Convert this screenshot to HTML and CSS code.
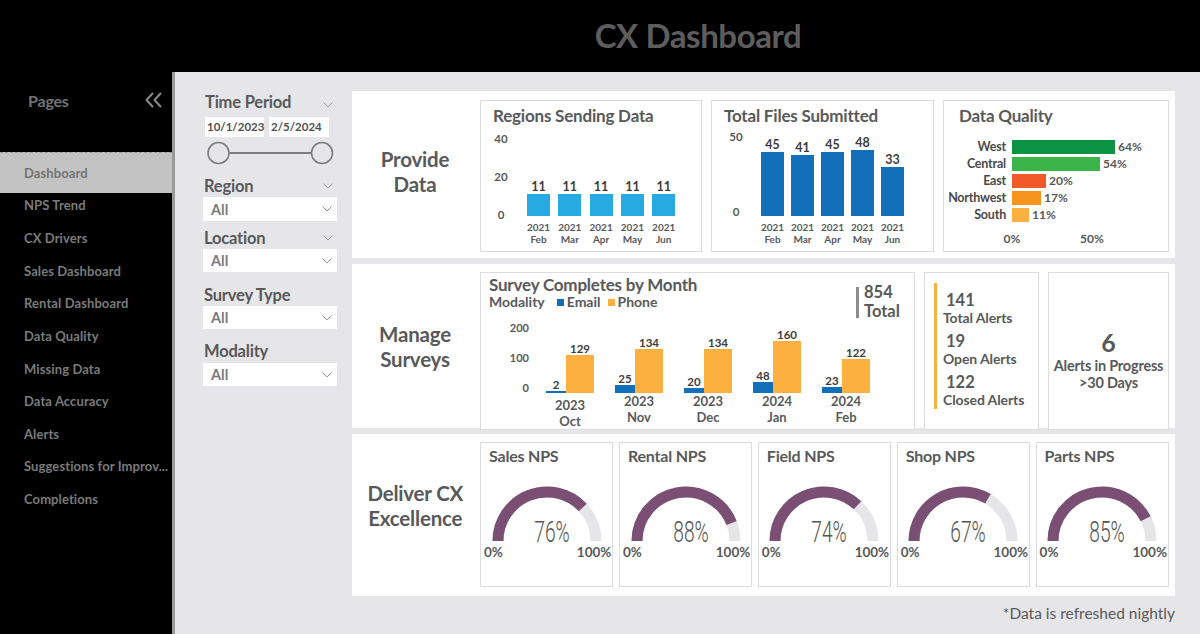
FILE: index.html
```html
<!DOCTYPE html>
<html lang="en">
<head>
<meta charset="utf-8">
<title>CX Dashboard</title>
<link rel="stylesheet" href="styles.css">
</head>
<body>
<header class="topbar"><h1 class="title">CX Dashboard</h1></header>
<div class="layout">
  <aside class="sidebar">
    <div class="pages-row">
      <span class="pages">Pages</span>
      <svg class="collapse" width="17" height="16" viewBox="0 0 17 16"><polyline points="8,1 1.5,8 8,15"/><polyline points="16,1 9.5,8 16,15"/></svg>
    </div>
    <nav class="nav">
      <div class="nav-item active">Dashboard</div>
      <div class="nav-item">NPS Trend</div>
      <div class="nav-item">CX Drivers</div>
      <div class="nav-item">Sales Dashboard</div>
      <div class="nav-item">Rental Dashboard</div>
      <div class="nav-item">Data Quality</div>
      <div class="nav-item">Missing Data</div>
      <div class="nav-item">Data Accuracy</div>
      <div class="nav-item">Alerts</div>
      <div class="nav-item">Suggestions for Improv...</div>
      <div class="nav-item">Completions</div>
    </nav>
  </aside>

  <main class="main">
    <section class="filters">
      <div class="f-head f-time"><span>Time Period</span><svg class="chev" viewBox="0 0 10 6"><polyline points="0.5,0.5 5,5 9.5,0.5"/></svg></div>
      <div class="dates"><span class="date d1">10/1/2023</span><span class="date d2">2/5/2024</span></div>
      <svg class="slider" width="134" height="26" viewBox="0 0 134 26"><line x1="26" y1="13" x2="108" y2="13"/><circle cx="15.5" cy="13" r="10.5"/><circle cx="119" cy="13" r="10.5"/></svg>

      <div class="f-head f-region"><span>Region</span><svg class="chev" viewBox="0 0 10 6"><polyline points="0.5,0.5 5,5 9.5,0.5"/></svg></div>
      <div class="dropdown dd-region"><span>All</span><svg class="chev" viewBox="0 0 10 6"><polyline points="0.5,0.5 5,5 9.5,0.5"/></svg></div>

      <div class="f-head f-location"><span>Location</span><svg class="chev" viewBox="0 0 10 6"><polyline points="0.5,0.5 5,5 9.5,0.5"/></svg></div>
      <div class="dropdown"><span>All</span><svg class="chev" viewBox="0 0 10 6"><polyline points="0.5,0.5 5,5 9.5,0.5"/></svg></div>

      <div class="f-head f-survey"><span>Survey Type</span></div>
      <div class="dropdown"><span>All</span><svg class="chev" viewBox="0 0 10 6"><polyline points="0.5,0.5 5,5 9.5,0.5"/></svg></div>

      <div class="f-head f-modality"><span>Modality</span></div>
      <div class="dropdown dd-modality"><span>All</span><svg class="chev" viewBox="0 0 10 6"><polyline points="0.5,0.5 5,5 9.5,0.5"/></svg></div>
    </section>

    <section class="content">
      <!-- Provide Data -->
      <div class="panel panel-provide">
        <div class="panel-label">Provide<br>Data</div>

        <div class="card">
          <div class="card-title">Regions Sending Data</div>
          <div class="colchart cc-regions">
            <div class="yaxis"><span>40</span><span>20</span><span>0</span></div>
            <div class="bars">
              <div class="bcol"><span class="val">11</span><div class="bar light" style="height:22px"></div><div class="xl">2021<br>Feb</div></div>
              <div class="bcol"><span class="val">11</span><div class="bar light" style="height:22px"></div><div class="xl">2021<br>Mar</div></div>
              <div class="bcol"><span class="val">11</span><div class="bar light" style="height:22px"></div><div class="xl">2021<br>Apr</div></div>
              <div class="bcol"><span class="val">11</span><div class="bar light" style="height:22px"></div><div class="xl">2021<br>May</div></div>
              <div class="bcol"><span class="val">11</span><div class="bar light" style="height:22px"></div><div class="xl">2021<br>Jun</div></div>
            </div>
          </div>
        </div>

        <div class="card">
          <div class="card-title">Total Files Submitted</div>
          <div class="colchart cc-files">
            <div class="yaxis"><span>50</span><span>0</span></div>
            <div class="bars">
              <div class="bcol"><span class="val">45</span><div class="bar dark" style="height:64px"></div><div class="xl">2021<br>Feb</div></div>
              <div class="bcol"><span class="val">41</span><div class="bar dark" style="height:61px"></div><div class="xl">2021<br>Mar</div></div>
              <div class="bcol"><span class="val">45</span><div class="bar dark" style="height:64px"></div><div class="xl">2021<br>Apr</div></div>
              <div class="bcol"><span class="val">48</span><div class="bar dark" style="height:66px"></div><div class="xl">2021<br>May</div></div>
              <div class="bcol"><span class="val">33</span><div class="bar dark" style="height:49px"></div><div class="xl">2021<br>Jun</div></div>
            </div>
          </div>
        </div>

        <div class="card">
          <div class="card-title dq-title">Data Quality</div>
          <div class="dq">
            <div class="dq-row"><span class="dq-lab">West</span><span class="dq-bar west" style="width:103px"></span><span class="dq-val">64%</span></div>
            <div class="dq-row"><span class="dq-lab">Central</span><span class="dq-bar central" style="width:88px"></span><span class="dq-val">54%</span></div>
            <div class="dq-row"><span class="dq-lab">East</span><span class="dq-bar east" style="width:34px"></span><span class="dq-val">20%</span></div>
            <div class="dq-row"><span class="dq-lab">Northwest</span><span class="dq-bar northwest" style="width:29px"></span><span class="dq-val">17%</span></div>
            <div class="dq-row"><span class="dq-lab">South</span><span class="dq-bar south" style="width:17px"></span><span class="dq-val">11%</span></div>
            <div class="dq-axis"><span>0%</span><span>50%</span></div>
          </div>
        </div>
      </div>

      <!-- Manage Surveys -->
      <div class="panel panel-manage">
        <div class="panel-label">Manage<br>Surveys</div>

        <div class="card survey">
          <div class="survey-head">
            <div class="survey-titles">
              <div class="s-title">Survey Completes by Month</div>
              <div class="legend"><span>Modality</span><i class="sw email"></i><span>Email</span><i class="sw phone"></i><span>Phone</span></div>
            </div>
            <div class="total">854<br>Total</div>
          </div>
          <div class="colchart survey-chart">
            <div class="yaxis"><span>200</span><span>100</span><span>0</span></div>
            <div class="groups">
              <div class="group">
                <div class="gbars">
                  <div class="gcol ecol"><span class="val">2</span><div class="bar email" style="height:2px"></div></div>
                  <div class="gcol pcol"><span class="val">129</span><div class="bar phone" style="height:38px"></div></div>
                </div>
                <div class="gx low">2023<br>Oct</div>
              </div>
              <div class="group">
                <div class="gbars">
                  <div class="gcol ecol"><span class="val">25</span><div class="bar email" style="height:8px"></div></div>
                  <div class="gcol pcol"><span class="val">134</span><div class="bar phone" style="height:44px"></div></div>
                </div>
                <div class="gx">2023<br>Nov</div>
              </div>
              <div class="group">
                <div class="gbars">
                  <div class="gcol ecol"><span class="val">20</span><div class="bar email" style="height:5px"></div></div>
                  <div class="gcol pcol"><span class="val">134</span><div class="bar phone" style="height:44px"></div></div>
                </div>
                <div class="gx">2023<br>Dec</div>
              </div>
              <div class="group">
                <div class="gbars">
                  <div class="gcol ecol"><span class="val">48</span><div class="bar email" style="height:11px"></div></div>
                  <div class="gcol pcol"><span class="val">160</span><div class="bar phone" style="height:52px"></div></div>
                </div>
                <div class="gx">2024<br>Jan</div>
              </div>
              <div class="group">
                <div class="gbars">
                  <div class="gcol ecol"><span class="val">23</span><div class="bar email" style="height:6px"></div></div>
                  <div class="gcol pcol"><span class="val">122</span><div class="bar phone" style="height:34px"></div></div>
                </div>
                <div class="gx">2024<br>Feb</div>
              </div>
            </div>
          </div>
        </div>

        <div class="card alerts">
          <div class="alert-bar"></div>
          <div class="alert-list">
            <div class="anum">141</div><div class="alab">Total Alerts</div>
            <div class="anum">19</div><div class="alab">Open Alerts</div>
            <div class="anum">122</div><div class="alab">Closed Alerts</div>
          </div>
        </div>

        <div class="card progress">
          <div class="big">6</div>
          <div class="sub">Alerts in Progress<br>&gt;30 Days</div>
        </div>
      </div>

      <!-- Deliver CX Excellence -->
      <div class="panel panel-deliver">
        <div class="panel-label">Deliver CX<br>Excellence</div>

        <div class="card nps">
          <div class="card-title">Sales NPS</div>
          <div class="gauge">
            <svg width="120" height="62" viewBox="0 0 120 62"><path class="track" d="M11 57 A49 49 0 0 1 109 57"/><path class="fill" d="M11 57 A49 49 0 0 1 95.72 23.46"/></svg>
            <span class="gval">76%</span>
          </div>
          <div class="gscale"><span>0%</span><span>100%</span></div>
        </div>

        <div class="card nps">
          <div class="card-title">Rental NPS</div>
          <div class="gauge">
            <svg width="120" height="62" viewBox="0 0 120 62"><path class="track" d="M11 57 A49 49 0 0 1 109 57"/><path class="fill" d="M11 57 A49 49 0 0 1 105.56 38.96"/></svg>
            <span class="gval">88%</span>
          </div>
          <div class="gscale"><span>0%</span><span>100%</span></div>
        </div>

        <div class="card nps">
          <div class="card-title">Field NPS</div>
          <div class="gauge">
            <svg width="120" height="62" viewBox="0 0 120 62"><path class="track" d="M11 57 A49 49 0 0 1 109 57"/><path class="fill" d="M11 57 A49 49 0 0 1 93.54 21.28"/></svg>
            <span class="gval">74%</span>
          </div>
          <div class="gscale"><span>0%</span><span>100%</span></div>
        </div>

        <div class="card nps">
          <div class="card-title">Shop NPS</div>
          <div class="gauge">
            <svg width="120" height="62" viewBox="0 0 120 62"><path class="track" d="M11 57 A49 49 0 0 1 109 57"/><path class="fill" d="M11 57 A49 49 0 0 1 84.94 14.83"/></svg>
            <span class="gval">67%</span>
          </div>
          <div class="gscale"><span>0%</span><span>100%</span></div>
        </div>

        <div class="card nps">
          <div class="card-title">Parts NPS</div>
          <div class="gauge">
            <svg width="120" height="62" viewBox="0 0 120 62"><path class="track" d="M11 57 A49 49 0 0 1 109 57"/><path class="fill" d="M11 57 A49 49 0 0 1 103.66 34.75"/></svg>
            <span class="gval">85%</span>
          </div>
          <div class="gscale"><span>0%</span><span>100%</span></div>
        </div>
      </div>

      <p class="footnote">*Data is refreshed nightly</p>
    </section>
  </main>
</div>
</body>
</html>
```

FILE: styles.css
```css
* { box-sizing: border-box; margin: 0; padding: 0; }

body {
  width: 1200px;
  height: 634px;
  overflow: hidden;
  background: #000;
  font-family: Lato, "Open Sans", "Liberation Sans", sans-serif;
  color: #58595b;
}

/* ---------- header ---------- */
.topbar {
  height: 72px;
  background: #000;
  display: flex;
  align-items: center;
  justify-content: center;
  padding-left: 196px;
}
.title {
  font-size: 33px;
  font-weight: 700;
  line-height: 1;
  color: #5d5d5d;
  letter-spacing: -0.4px;
  margin-top: -1px;
}

/* ---------- layout ---------- */
.layout {
  display: flex;
  height: 562px;
}

/* ---------- sidebar ---------- */
.sidebar {
  width: 172px;
  flex: none;
  background: #000;
}
.pages-row {
  height: 56px;
  display: flex;
  align-items: center;
  justify-content: space-between;
  padding: 0 10px 0 28px;
}
.pages {
  font-size: 16px;
  font-weight: 700;
  color: #737373;
  letter-spacing: -0.2px;
}
.collapse polyline {
  fill: none;
  stroke: #8a8a8a;
  stroke-width: 2;
}
.nav { margin-top: 28px; }
.nav-item {
  height: 32.65px;
  display: flex;
  align-items: center;
  padding-left: 24px;
  font-size: 13px;
  font-weight: 700;
  color: #7a7a7a;
  letter-spacing: 0.1px;
  white-space: nowrap;
}
.nav-item.active {
  height: 41px;
  margin: -4px 0;
  background: #c3c3c3;
  color: #737373;
  border-top: 1px dashed #9c9c9c;
}

/* ---------- main ---------- */
.main {
  flex: 1;
  background: #e6e6e8;
  border-left: 3px solid #9a9a9a;
  padding: 19px 25px 0 28px;
  display: flex;
  gap: 15px;
}

/* ---------- filters ---------- */
.filters {
  width: 134px;
  flex: none;
  padding-top: 1px;
}
.chev {
  width: 10px;
  height: 6px;
  flex: none;
}
.chev polyline {
  fill: none;
  stroke: #9a9a9a;
  stroke-width: 1;
}
.f-head {
  height: 20px;
  display: flex;
  align-items: center;
  justify-content: space-between;
  padding: 0 4px 0 1px;
  font-size: 16.5px;
  font-weight: 700;
  color: #58595b;
  letter-spacing: -0.2px;
}
.f-time { padding-left: 2px; }
.f-time .chev { margin-top: 5px; }
.f-region { margin-top: 10px; }
.f-location { margin-top: 7px; }
.f-survey { margin-top: 13px; }
.f-modality { margin-top: 12px; }

.dates {
  display: flex;
  gap: 5px;
  margin-top: 5px;
  padding-left: 2px;
}
.date {
  height: 20px;
  background: #fff;
  font-size: 11.5px;
  font-weight: 700;
  color: #505050;
  line-height: 20px;
  padding-left: 2px;
}
.d1 { width: 59px; }
.d2 { width: 60px; }
.slider {
  display: block;
  margin-top: 3px;
}
.slider line {
  stroke: #7d7d7d;
  stroke-width: 1.8;
}
.slider circle {
  fill: #e6e6e8;
  stroke: #7d7d7d;
  stroke-width: 1.6;
}
.dropdown {
  height: 23px;
  margin-top: 1px;
  background: #fff;
  display: flex;
  align-items: center;
  justify-content: space-between;
  padding: 0 5px 0 8px;
  font-size: 14.5px;
  font-weight: 700;
  color: #7b7b7b;
}
.dd-region { height: 24px; }
.dd-modality { margin-top: 2px; }

/* ---------- content ---------- */
.content {
  width: 823px;
  flex: none;
  display: flex;
  flex-direction: column;
}
.panel {
  background: #fff;
  display: grid;
}
.panel-label {
  align-self: center;
  text-align: center;
  font-size: 20.5px;
  font-weight: 700;
  line-height: 25px;
  color: #58595b;
  letter-spacing: -0.2px;
}
.panel-provide {
  height: 167px;
  grid-template-columns: 119px 222px 223px 1fr;
  column-gap: 9px;
  padding: 9px 6px 6px 0;
}
.panel-provide .panel-label { padding-left: 7px; margin-bottom: 9px; }
.panel-manage {
  height: 164px;
  margin-top: 6px;
  grid-template-columns: 119px 435px 115px 1fr;
  column-gap: 9px;
  padding: 8px 6px 3px 0;
}
.panel-manage .panel-label { padding-left: 7px; margin-bottom: 9px; }
.panel-deliver {
  height: 162px;
  margin-top: 6px;
  grid-template-columns: 122.5px repeat(5, 1fr);
  column-gap: 5.5px;
  padding: 8px 6px 9px 0;
}
.panel-deliver .panel-label { padding-left: 4px; margin-bottom: 18px; }

.card {
  background: #fff;
  border: 1px solid #dcdcdc;
}
.card-title {
  padding: 6px 0 0 12px;
  font-size: 17px;
  font-weight: 700;
  line-height: 18px;
  color: #58595b;
  letter-spacing: -0.2px;
  white-space: nowrap;
}

/* column charts */
.colchart {
  display: flex;
  align-items: flex-start;
}
.yaxis {
  display: flex;
  flex-direction: column;
  justify-content: space-between;
  font-size: 11.5px;
  font-weight: 700;
  line-height: 14px;
  color: #58595b;
}
.bars {
  display: flex;
}
.bcol {
  width: 23px;
  height: 113px;
  display: flex;
  flex-direction: column;
  justify-content: flex-end;
  align-items: center;
}
.val {
  font-size: 12.5px;
  font-weight: 700;
  line-height: 14px;
  color: #3d3d3d;
  white-space: nowrap;
}
.bar { width: 100%; flex: none; }
.bar.light { background: #27aae1; }
.bar.dark { background: #1170b9; }
.xl {
  height: 29px;
  padding-top: 5px;
  text-align: center;
  font-size: 10px;
  font-weight: 700;
  line-height: 12px;
  color: #58595b;
}

.cc-regions { margin-top: 7px; }
.cc-regions .yaxis {
  width: 14px;
  height: 90px;
  margin-left: 13px;
  text-align: center;
}
.cc-regions .bars { margin-left: 19px; gap: 8.3px; }

.cc-files { margin-top: 7px; }
.cc-files .yaxis {
  width: 20px;
  height: 89px;
  margin: -2px 0 0 14px;
  text-align: center;
}
.cc-files .bars { margin-left: 15px; gap: 7px; }

/* data quality */
.dq-title { padding-left: 15px; }
.dq { margin-top: 13px; }
.dq-row {
  height: 17px;
  display: flex;
  align-items: center;
}
.dq-lab {
  width: 62px;
  margin-right: 6px;
  text-align: right;
  font-size: 12.5px;
  font-weight: 700;
  color: #4a4a4a;
  letter-spacing: -0.2px;
}
.dq-bar {
  height: 14px;
  flex: none;
}
.dq-bar.west { background: #0c9444; }
.dq-bar.central { background: #3bb44a; }
.dq-bar.east { background: #f05a28; }
.dq-bar.northwest { background: #f7941d; }
.dq-bar.south { background: #fbb040; }
.dq-val {
  margin-left: 3px;
  font-size: 12px;
  font-weight: 700;
  color: #58595b;
}
.dq-axis {
  display: flex;
  margin-top: 9px;
  padding-left: 48px;
  font-size: 12px;
  font-weight: 700;
  line-height: 14px;
}
.dq-axis span {
  width: 40px;
  text-align: center;
}
.dq-axis span + span { margin-left: 40px; }

/* survey chart */
.survey-head {
  height: 48px;
  display: flex;
  padding: 4px 2px 0 8px;
}
.survey-titles { flex: 1; }
.s-title {
  font-size: 17px;
  font-weight: 700;
  line-height: 16px;
  color: #58595b;
  letter-spacing: -0.2px;
  white-space: nowrap;
}
.legend {
  margin-top: 2px;
  display: flex;
  align-items: center;
  font-size: 14px;
  font-weight: 700;
  line-height: 14px;
  color: #58595b;
}
.sw {
  width: 7px;
  height: 7px;
  display: inline-block;
  margin: 1px 3px 0 12px;
}
.sw.phone { margin-left: 7px; }
.sw.email { background: #1170b9; }
.sw.phone { background: #fbb040; }
.total {
  position: relative;
  width: 56px;
  margin-top: 6px;
  padding-left: 8px;
  font-size: 16.5px;
  font-weight: 700;
  line-height: 19px;
  color: #58595b;
}
.total::before {
  content: "";
  position: absolute;
  left: 0;
  top: 4px;
  bottom: 3px;
  width: 3px;
  background: #8c8c8c;
}
.survey-chart .yaxis {
  width: 40px;
  height: 74px;
  margin-left: 8px;
  text-align: right;
  font-size: 11px;
}
.groups {
  display: flex;
  gap: 21px;
  margin-left: 17px;
}
.group {
  display: flex;
  flex-direction: column;
}
.gbars {
  height: 72px;
  display: flex;
  align-items: flex-end;
}
.gcol {
  display: flex;
  flex-direction: column;
  align-items: center;
}
.gcol .val { font-size: 11.5px; line-height: 13px; }
.ecol { width: 20px; }
.pcol { width: 28px; }
.bar.email { background: #1170b9; }
.bar.phone { background: #fbb040; }
.gx {
  padding-top: 1px;
  text-align: center;
  font-size: 13px;
  font-weight: 700;
  line-height: 15.6px;
  color: #58595b;
}
.gx.low { padding-top: 5px; }

/* alerts */
.alerts { display: flex; }
.alert-bar {
  width: 3px;
  height: 126px;
  margin: 10px 0 0 9px;
  background: #fbb040;
  flex: none;
}
.alert-list {
  padding: 18px 0 0 6px;
  color: #58595b;
}
.anum {
  padding-left: 3px;
  font-size: 16.5px;
  font-weight: 700;
  line-height: 18px;
}
.alab {
  margin-top: 1px;
  font-size: 14px;
  font-weight: 700;
  line-height: 16px;
  letter-spacing: -0.1px;
  white-space: nowrap;
}
.alab + .anum { margin-top: 6px; }

.progress {
  padding-top: 54px;
  text-align: center;
  color: #58595b;
}
.big {
  font-size: 25px;
  font-weight: 700;
  line-height: 30px;
}
.sub {
  font-size: 14.5px;
  font-weight: 700;
  line-height: 17.4px;
  letter-spacing: -0.2px;
  white-space: nowrap;
}

/* NPS gauges */
.nps .card-title { padding: 4px 0 0 8px; font-size: 16px; }
.gauge {
  position: relative;
  width: 120px;
  height: 62px;
  margin: 19px auto 0;
}
.gauge svg { display: block; }
.gauge .track {
  fill: none;
  stroke: #e6e6e8;
  stroke-width: 11;
}
.gauge .fill {
  fill: none;
  stroke: #7b4f74;
  stroke-width: 11;
}
.gval {
  position: absolute;
  left: 65px;
  top: 48px;
  transform: translate(-50%, -50%) scaleX(0.66);
  font-family: Roboto, "Liberation Sans", sans-serif;
  font-weight: 300;
  font-size: 29px;
  line-height: 1;
  color: #555;
  white-space: nowrap;
}
.gscale {
  display: flex;
  justify-content: space-between;
  margin-top: -1px;
  padding: 0 1px 0 3px;
  font-size: 13.5px;
  font-weight: 700;
  line-height: 14px;
  color: #58595b;
}

.footnote {
  margin-top: 7px;
  text-align: right;
  font-size: 15.5px;
  line-height: 20px;
  color: #58595b;
}
```
